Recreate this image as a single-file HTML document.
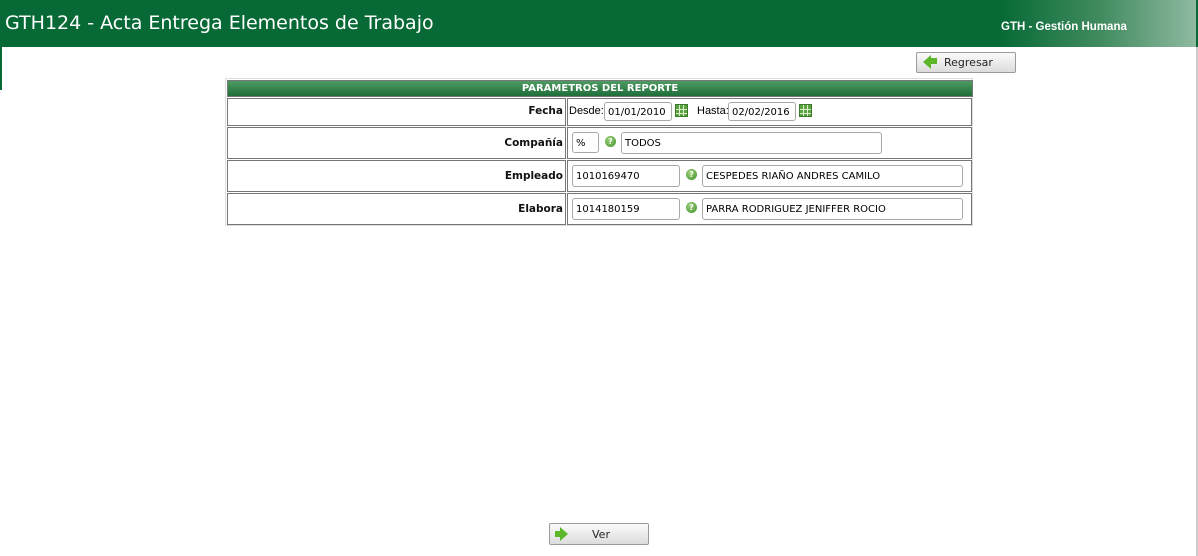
<html><head><style>
body{margin:0;width:1198px;height:556px;background:#fff;font-family:"DejaVu Sans","Liberation Sans",sans-serif;position:relative;overflow:hidden}
.a{position:absolute}
.hdr{left:0;top:0;width:1198px;height:47px;background:#076a36}
.t{left:5px;top:12px;color:#fff;font-size:19px}
.btn{border:1px solid #9a9a9a;border-radius:2px;background:linear-gradient(#fbfbfb,#dcdcdc);font-size:11px;color:#222}
.box{border:1px solid #777;}
.inp{border:1px solid #a8a8a8;border-radius:3px;height:19px;font-size:10px;line-height:19px;padding-left:3px;box-sizing:border-box;background:#fff}
.lb{font-size:10.5px;font-weight:bold;text-align:right;color:#111}
.sm{font-size:10px;font-family:"Liberation Sans",sans-serif;font-size:11px}
.q{width:11px;height:11px;border-radius:50%;background:radial-gradient(circle at 40% 35%,#9ed27a,#3f8f2a);color:#fff;font-size:8px;font-weight:bold;text-align:center;line-height:11px}
.cal{width:13px;height:13px;background:#5aa33f;border:1px solid #3a7a2a;box-sizing:border-box;background-image:linear-gradient(90deg,transparent 3px,#dff0d0 3px,#dff0d0 4px,transparent 4px,transparent 7px,#dff0d0 7px,#dff0d0 8px,transparent 8px),linear-gradient(transparent 4px,#dff0d0 4px,#dff0d0 5px,transparent 5px,transparent 8px,#dff0d0 8px,#dff0d0 9px,transparent 9px)}
.arrow{width:0;height:0;border-top:7px solid transparent;border-bottom:7px solid transparent;border-right:8px solid #5cb82a}
</style></head><body>
<div class="a hdr"></div>
<div class="a" style="left:1000px;top:0;width:196px;height:47px;background:linear-gradient(90deg,#076a36,#3f8a5e 50%,#8fb9a0)"></div>
<div class="a t">GTH124 - Acta Entrega Elementos de Trabajo</div>
<div class="a" style="left:1001px;top:21px;color:#fff;font-size:11.5px;font-weight:bold;font-family:'Liberation Sans',sans-serif">GTH - Gestión Humana</div>
<div class="a" style="left:0;top:47px;width:2px;height:43px;background:#076a36"></div>
<div class="a" style="left:1196px;top:47px;width:2px;height:509px;background:#ccc"></div>
<div class="a btn" style="left:916px;top:52px;width:98px;height:19px"><div class="a arrow" style="left:6px;top:2px"></div><div class="a" style="left:12px;top:5px;width:8px;height:6px;background:#5cb82a"></div><span class="a" style="left:27px;top:3px">Regresar</span></div>
<div class="a" style="left:225px;top:78px;width:748px;height:148px;border:1px solid #ddd;box-sizing:border-box"></div>
<div class="a box" style="left:227px;top:80px;width:744px;height:15px;background:linear-gradient(#4e9a62,#1f6e3a);color:#fff;font-size:10px;font-weight:bold;text-align:center;line-height:15px">PARAMETROS DEL REPORTE</div>
<div class="a box" style="left:227px;top:98px;width:337px;height:26px"></div><div class="a box" style="left:567px;top:98px;width:403px;height:26px"></div>
<div class="a box" style="left:227px;top:127px;width:337px;height:30px"></div><div class="a box" style="left:567px;top:127px;width:403px;height:30px"></div>
<div class="a box" style="left:227px;top:160px;width:337px;height:30px"></div><div class="a box" style="left:567px;top:160px;width:403px;height:30px"></div>
<div class="a box" style="left:227px;top:193px;width:337px;height:30px"></div><div class="a box" style="left:567px;top:193px;width:403px;height:30px"></div>
<div class="a lb" style="left:400px;top:105px;width:163px">Fecha</div>
<div class="a lb" style="left:400px;top:137px;width:163px">Compañía</div>
<div class="a lb" style="left:400px;top:170px;width:163px">Empleado</div>
<div class="a lb" style="left:400px;top:203px;width:163px">Elabora</div>
<div class="a sm" style="left:569px;top:105px">Desde:</div>
<div class="a inp" style="left:604px;top:102px;width:68px">01/01/2010</div>
<div class="a cal" style="left:675px;top:104px"></div>
<div class="a sm" style="left:697px;top:105px">Hasta:</div>
<div class="a inp" style="left:728px;top:102px;width:68px">02/02/2016</div>
<div class="a cal" style="left:799px;top:104px"></div>
<div class="a inp" style="left:572px;top:132px;width:27px;height:21px;line-height:21px">%</div>
<div class="a q" style="left:605px;top:136px">?</div>
<div class="a inp" style="left:621px;top:132px;width:261px;height:22px;line-height:22px">TODOS</div>
<div class="a inp" style="left:572px;top:165px;width:108px;height:22px;line-height:22px">1010169470</div>
<div class="a q" style="left:686px;top:169px">?</div>
<div class="a inp" style="left:702px;top:165px;width:261px;height:22px;line-height:22px">CESPEDES RIAÑO ANDRES CAMILO</div>
<div class="a inp" style="left:572px;top:198px;width:108px;height:22px;line-height:22px">1014180159</div>
<div class="a q" style="left:686px;top:202px">?</div>
<div class="a inp" style="left:702px;top:198px;width:261px;height:22px;line-height:22px">PARRA RODRIGUEZ JENIFFER ROCIO</div>
<div class="a btn" style="left:549px;top:523px;width:98px;height:20px"><div class="a arrow" style="left:10px;top:3px;transform:scaleX(-1)"></div><div class="a" style="left:5px;top:7px;width:8px;height:6px;background:#5cb82a"></div><span class="a" style="left:42px;top:4px">Ver</span></div>
</body></html>
